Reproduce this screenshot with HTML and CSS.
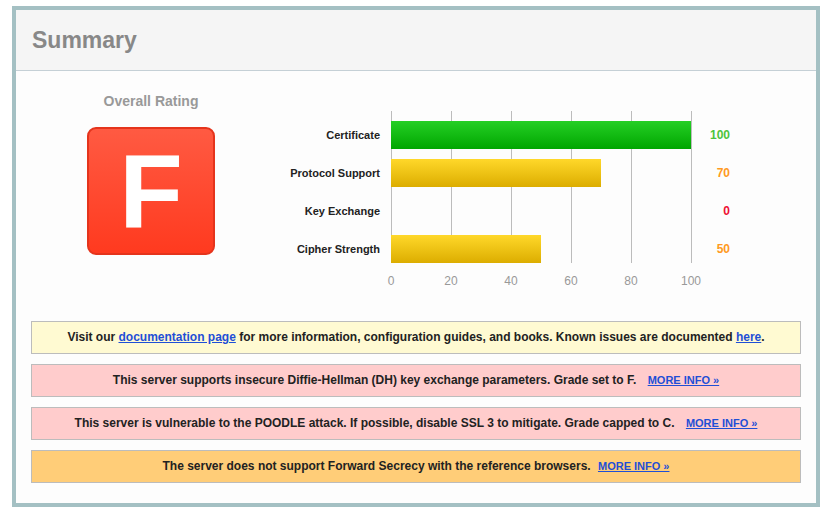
FILE: index.html
```html
<!DOCTYPE html>
<html>
<head>
<meta charset="utf-8">
<link rel="stylesheet" href="styles.css">
</head>
<body>
<div class="frame">
  <div class="header"><h1 class="title">Summary</h1></div>
  <div class="content">
    <div class="top">
      <div class="rating">
        <div class="rating-title">Overall Rating</div>
        <div class="grade">F</div>
      </div>
      <div class="chart-wrap">
        <div class="chart">
          <div class="gridline" style="left:105px"></div>
          <div class="gridline" style="left:165px"></div>
          <div class="gridline" style="left:225px"></div>
          <div class="gridline" style="left:285px"></div>
          <div class="gridline" style="left:345px"></div>
          <div class="gridline" style="left:405px"></div>

          <div class="label">Certificate</div>
          <div class="track"><div class="bar green" style="width:300px"></div></div>
          <div class="value v-green">100</div>

          <div class="label">Protocol Support</div>
          <div class="track"><div class="bar yellow" style="width:210px"></div></div>
          <div class="value v-orange">70</div>

          <div class="label">Key Exchange</div>
          <div class="track"></div>
          <div class="value v-red">0</div>

          <div class="label">Cipher Strength</div>
          <div class="track"><div class="bar yellow" style="width:150px"></div></div>
          <div class="value v-orange">50</div>
        </div>
        <div class="axis">
          <span class="tick">0</span>
          <span class="tick">20</span>
          <span class="tick">40</span>
          <span class="tick">60</span>
          <span class="tick">80</span>
          <span class="tick">100</span>
        </div>
      </div>
    </div>
    <div class="notices">
      <div class="notice info">Visit our <a href="#">documentation page</a> for more information, configuration guides, and books. Known issues are documented <a href="#">here</a>.</div>
      <div class="notice error">This server supports insecure Diffie-Hellman (DH) key exchange parameters. Grade set to F. <a class="more" href="#">MORE INFO »</a></div>
      <div class="notice error">This server is vulnerable to the POODLE attack. If possible, disable SSL 3 to mitigate. Grade capped to C. <a class="more" href="#">MORE INFO »</a></div>
      <div class="notice warning">The server does not support Forward Secrecy with the reference browsers. <a class="more more-tight" href="#">MORE INFO »</a></div>
    </div>
  </div>
</div>
</body>
</html>
```

FILE: styles.css
```css
* { box-sizing: border-box; }
html, body { margin: 0; padding: 0; background: #ffffff; }
body { font-family: "Liberation Sans", Arial, Helvetica, sans-serif; }

.frame {
  margin: 6px 0 0 12px;
  width: 808px;
  height: 501px;
  border: 4px solid #a4c0c3;
  background: #fdfdfd;
  display: flex;
  flex-direction: column;
}

.header {
  height: 61px;
  background: #f5f5f5;
  border-bottom: 1px solid #c5d0d6;
  display: flex;
  align-items: center;
  padding-left: 16px;
}
.title {
  margin: 0;
  font-size: 23px;
  font-weight: bold;
  color: #888888;
}

.content {
  flex: 1;
  display: flex;
  flex-direction: column;
}

.top {
  height: 250px;
  display: flex;
}

.rating {
  width: 270px;
  padding-top: 22px;
  display: flex;
  flex-direction: column;
  align-items: center;
}
.rating-title {
  font-size: 14px;
  line-height: 17px;
  font-weight: bold;
  color: #999999;
}
.grade {
  margin-top: 17px;
  width: 128px;
  height: 128px;
  border: 2px solid #e5341c;
  border-radius: 9px;
  background: linear-gradient(#ff5a42, #ff3a1f);
  color: #ffffff;
  font-size: 104px;
  font-weight: bold;
  line-height: 124px;
  text-align: center;
}

.chart-wrap {
  padding-top: 40px;
}
.chart {
  position: relative;
  display: grid;
  grid-template-columns: 105px 300px 39px;
  grid-auto-rows: 28px;
  row-gap: 10px;
  padding-top: 10px;
}
.gridline {
  position: absolute;
  top: 0;
  width: 1px;
  height: 152px;
  background: #bcbcbc;
  z-index: 0;
}
.label {
  text-align: right;
  padding-right: 11px;
  font-size: 11px;
  font-weight: bold;
  line-height: 28px;
  color: #222222;
}
.track {
  position: relative;
  z-index: 1;
}
.bar { height: 28px; }
.green { background: linear-gradient(#25cf25, #00a600); }
.yellow { background: linear-gradient(#ffd82a, #dcad00); }
.value {
  text-align: right;
  font-size: 12px;
  font-weight: bold;
  line-height: 28px;
}
.v-green { color: #4cc43c; }
.v-orange { color: #ff9a22; }
.v-red { color: #ee1133; }

.axis {
  margin-left: 105px;
  margin-top: 11px;
  width: 300px;
  display: flex;
  justify-content: space-between;
  font-size: 12px;
  line-height: 14px;
  color: #999999;
}
.tick {
  width: 0;
  display: flex;
  justify-content: center;
  white-space: nowrap;
}

.notices {
  padding: 0 15px;
  display: flex;
  flex-direction: column;
  gap: 10px;
}
.notice {
  height: 33px;
  border: 1px solid #bcbcbc;
  text-align: center;
  font-size: 12px;
  font-weight: bold;
  line-height: 31px;
  color: #222222;
}
.notice a { color: #1f4fd6; }
.info { background: #fffad2; }
.error { background: #ffcccc; }
.warning { background: #ffcd78; }
.more {
  margin-left: 8px;
  font-size: 11px;
}
.more-tight { margin-left: 4px; }
```
